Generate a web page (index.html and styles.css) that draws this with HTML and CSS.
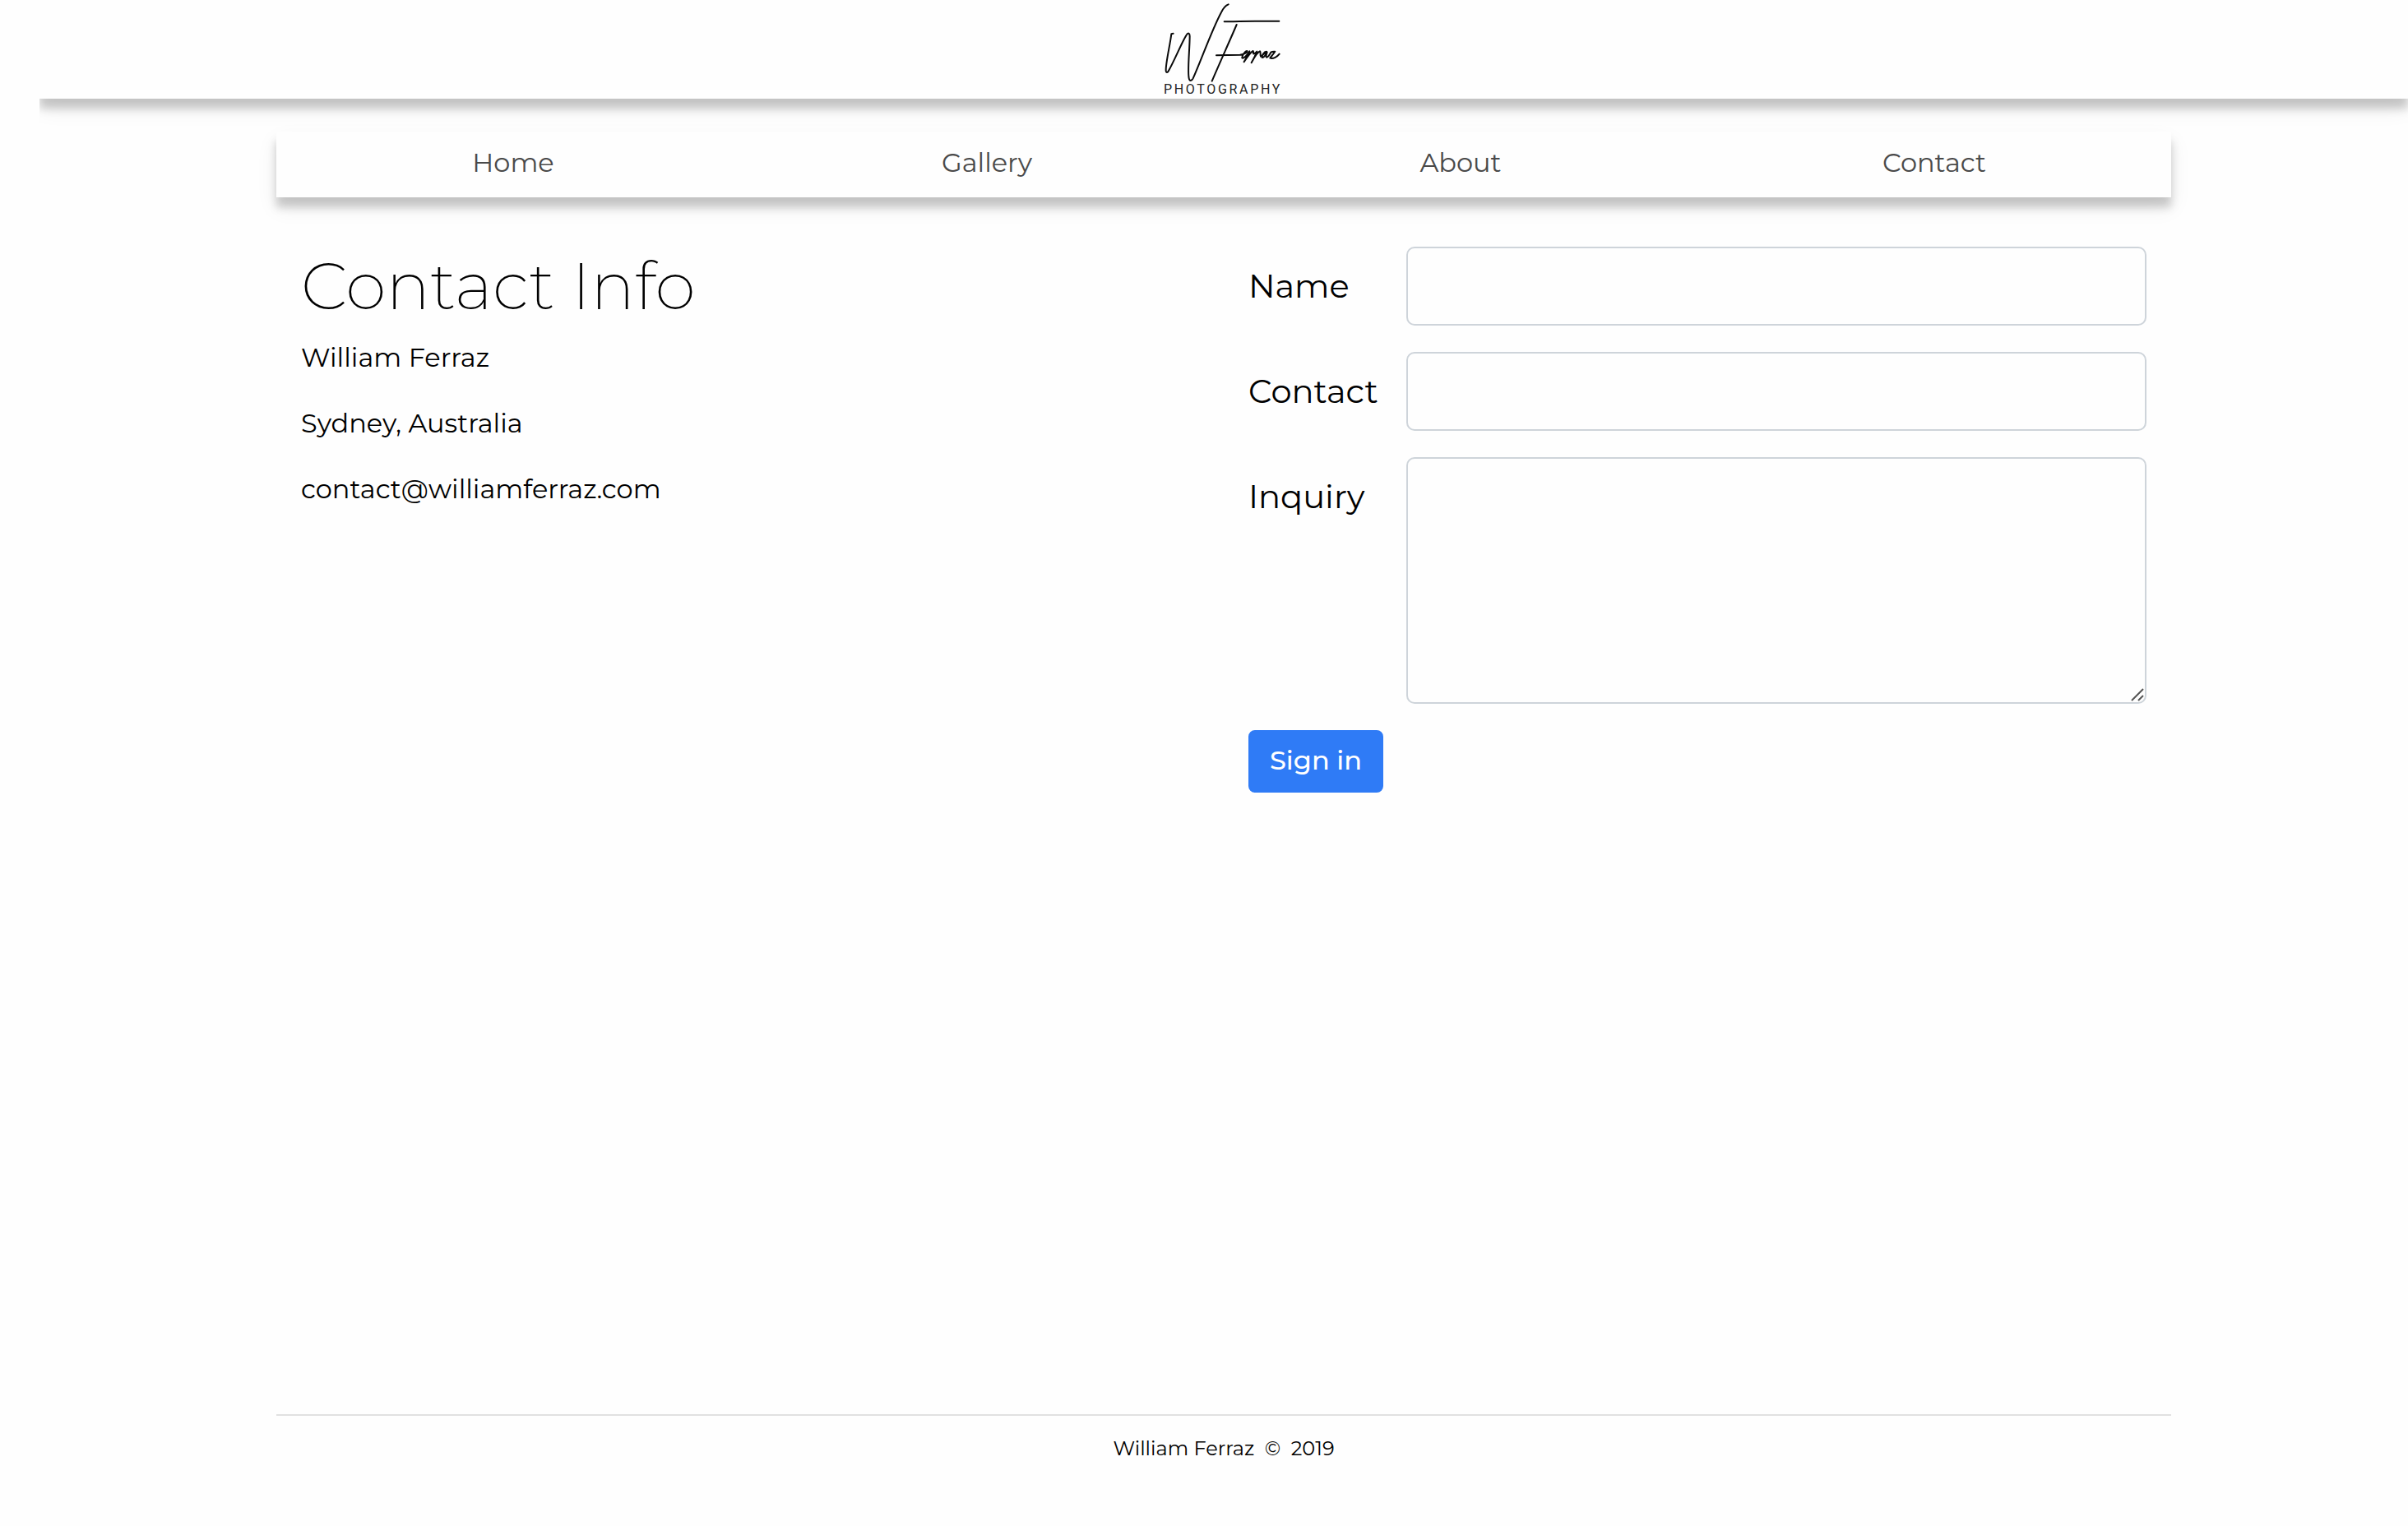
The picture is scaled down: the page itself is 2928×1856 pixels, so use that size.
FILE: index.html
```html
<!DOCTYPE html>
<html lang="en">
<head>
<meta charset="utf-8">
<meta name="viewport" content="width=device-width, initial-scale=1">
<title>William Ferraz Photography - Contact</title>
<link rel="stylesheet" href="styles.css">
</head>
<body>
<div class="page">
  <header class="header">
    <a class="logo" href="#" aria-label="W Ferraz Photography">
      <svg class="logo-mark" viewBox="99 0 450 360" aria-hidden="true">
        <g class="logo-stroke">
          <path d="M140 122 L133 124 C128 165 112 230 113 258 C114 267 120 265 123 258 C145 220 175 145 190 125 C195 118 200 122 200 132 C200 180 190 270 198 289 C201 297 208 294 212 286 C240 225 280 110 315 45 C322 30 330 20 341 16"/>
          <path d="M326 79 L340 79 C400 76 470 77 526 77"/>
          <path d="M371 90 C350 140 300 250 281 296"/>
          <path d="M297 202 L383 200 C400 199 412 190 409 186 C404 184 390 203 391 211 C396 217 412 198 418 187 C414 200 404 215 398 226 C408 210 420 192 431 186 C434 190 430 197 434 196 C440 193 443 190 445 188 C440 202 431 217 425 229 C435 210 445 192 456 187 C460 190 456 200 459 206 C464 204 476 190 481 189 C472 186 462 204 464 210 C472 212 480 192 482 191 C478 202 477 210 482 209 C488 207 492 197 496 191 C502 187 508 189 511 188 C506 198 495 207 493 212 C505 216 520 206 527 197"/>
        </g>
        <text class="logo-text" x="105" y="342">PHOTOGRAPHY</text>
      </svg>
    </a>
  </header>

  <div class="container">
    <nav class="nav">
      <a href="#">Home</a>
      <a href="#">Gallery</a>
      <a href="#">About</a>
      <a href="#">Contact</a>
    </nav>

    <main class="main">
      <section class="info">
        <h1>Contact Info</h1>
        <p>William Ferraz</p>
        <p>Sydney, Australia</p>
        <p>contact@williamferraz.com</p>
      </section>

      <form class="form">
        <div class="field">
          <label for="name">Name</label>
          <input class="control" id="name" type="text">
        </div>
        <div class="field">
          <label for="contact">Contact</label>
          <input class="control" id="contact" type="text">
        </div>
        <div class="field">
          <label for="inquiry">Inquiry</label>
          <div class="area">
            <textarea class="control" id="inquiry"></textarea>
            <svg class="grip" viewBox="0 0 16 16" aria-hidden="true"><path d="M1 15 L15 1 M9 15 L15 9"/></svg>
          </div>
        </div>
        <button class="submit" type="submit">Sign in</button>
      </form>
    </main>

    <footer class="footer">William Ferraz &nbsp;©&nbsp; 2019</footer>
  </div>
</div>
</body>
</html>
```
FILE: styles.css
```css
* {
  box-sizing: border-box;
}

body {
  margin: 0;
  padding-left: 48px;
  background: #fefefe;
  color: #000;
  font-family: Montserrat, Inter, sans-serif;
  font-size: 32px;
  line-height: 48px;
}

.page {
  display: flex;
  flex-direction: column;
  min-height: 100vh;
  overflow: hidden;
}

.header,
.nav {
  background: #fefefe;
  box-shadow: 0 12px 10px rgba(0, 0, 0, 0.18), 0 12px 24px rgba(0, 0, 0, 0.08);
}

.header {
  display: flex;
  justify-content: center;
}

.logo,
.logo-mark {
  display: block;
}

.logo-mark {
  width: 150px;
  height: 120px;
}

.logo-stroke {
  fill: none;
  stroke: #0a0a0a;
  stroke-width: 6;
  stroke-linecap: round;
  stroke-linejoin: round;
}

.logo-text {
  fill: #222;
  font-family: Roboto, sans-serif;
  font-size: 48px;
  letter-spacing: 8px;
}

.container {
  display: flex;
  flex: 1;
  flex-direction: column;
  width: 80%;
  margin: 40px auto 0;
}

.nav {
  display: grid;
  grid-template-columns: repeat(4, 1fr);
  text-align: center;
}

.nav a {
  padding: 14px 0 18px;
  color: #4a4a4a;
  text-decoration: none;
}

.main {
  display: grid;
  flex: 1;
  grid-template-columns: 1fr 1fr;
  padding-top: 60px;
}

.info {
  padding: 0 30px;
}

.info h1 {
  margin: 0 0 15px;
  font-size: 80px;
  font-weight: 200;
  line-height: 96px;
}

.info p {
  margin: 0 0 32px;
}

.form {
  display: flex;
  flex-direction: column;
  align-items: flex-start;
  gap: 32px;
  padding: 0 30px;
}

.field {
  display: grid;
  grid-template-columns: 162px 1fr;
  gap: 30px;
  width: 100%;
}

.field label {
  padding-top: 18px;
  font-size: 40px;
  line-height: 60px;
}

.control {
  display: block;
  width: 100%;
  height: 96px;
  padding: 16px 32px;
  border: 2px solid #ced4da;
  border-radius: 10px;
  background: #fefefe;
  font: inherit;
}

.area {
  position: relative;
}

.area .control {
  height: 300px;
  resize: none;
}

.grip {
  position: absolute;
  right: 3px;
  bottom: 3px;
  width: 16px;
  height: 16px;
  fill: none;
  stroke: #555;
  stroke-width: 2;
}

.submit {
  padding: 11px 24px 13px;
  border: 2px solid #2f7bf6;
  border-radius: 8px;
  background: #2f7bf6;
  color: #fff;
  font: inherit;
  font-weight: 500;
}

.footer {
  padding: 20px 0 74px;
  border-top: 2px solid #e1e1e1;
  font-size: 24px;
  line-height: 40px;
  text-align: center;
}
```
